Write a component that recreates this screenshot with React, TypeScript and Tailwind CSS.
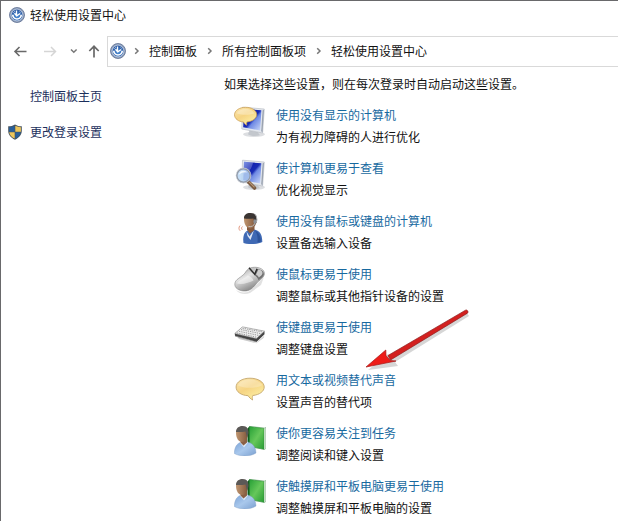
import React from 'react';

const monitorBase = (
  <>
    <ellipse cx="20" cy="28.3" rx="11" ry="2.6" fill="#dcdee1" />
    <path d="M15.5 24.5l8 1.500 2.500 3.200c-5 1.400-9.500.8-12-1z" fill="#c3c7cd" />
    <path d="M8.500 1.200L30.300 3 28.600 27 7.800 23z" fill="#e4e8ee" stroke="#b1b7c0" strokeWidth="0.6" />
    <path d="M10 2.800L27.400 4.300 26.200 24.500 9.200 21.200z" fill="url(#screen)" />
    <path d="M10 2.800L19 3.600c-1 6-4.500 10-9.500 11.500z" fill="#fff" opacity="0.25" />
    <path d="M28.600 4.200L30 3.800 28.500 26.500 27.200 25.200z" fill="#9aa3b0" />
  </>
);

function Gradients() {
  return (
    <svg className="absolute h-0 w-0" aria-hidden="true">
      <defs>
        <linearGradient id="screen" x1="0" y1="0.1" x2="0.9" y2="1">
          <stop offset="0" stopColor="#4a68d8" />
          <stop offset="0.3" stopColor="#1222b0" />
          <stop offset="0.5" stopColor="#1a2cb4" />
          <stop offset="0.6" stopColor="#6f8ae4" />
          <stop offset="1" stopColor="#c3d2f7" />
        </linearGradient>
        <linearGradient id="speech" x1="0" y1="0" x2="0.7" y2="1">
          <stop offset="0" stopColor="#fbe7b4" />
          <stop offset="0.5" stopColor="#f6d483" />
          <stop offset="1" stopColor="#fdf0a4" />
        </linearGradient>
        <linearGradient id="book" x1="0" y1="0" x2="1" y2="1">
          <stop offset="0" stopColor="#27a036" />
          <stop offset="0.5" stopColor="#66c75a" />
          <stop offset="1" stopColor="#279c34" />
        </linearGradient>
        <linearGradient id="shirt" x1="0" y1="0" x2="1" y2="1">
          <stop offset="0" stopColor="#7ba3d8" />
          <stop offset="0.5" stopColor="#a9c8ec" />
          <stop offset="1" stopColor="#7ba0d0" />
        </linearGradient>
        <linearGradient id="skin" x1="0" y1="0" x2="1" y2="0">
          <stop offset="0" stopColor="#c09670" />
          <stop offset="1" stopColor="#7d5439" />
        </linearGradient>
        <linearGradient id="metal" x1="0" y1="0" x2="0.6" y2="1">
          <stop offset="0" stopColor="#8b8b8b" />
          <stop offset="0.45" stopColor="#e4e4e4" />
          <stop offset="1" stopColor="#7c7c7c" />
        </linearGradient>
        <radialGradient id="badge" cx="0.5" cy="0.6" r="0.6">
          <stop offset="0" stopColor="#4d8ed6" />
          <stop offset="1" stopColor="#24519c" />
        </radialGradient>
      </defs>
    </svg>
  );
}

function EaseIcon() {
  return (
    <svg viewBox="0 0 16 16" className="h-4 w-4 shrink-0" aria-hidden="true">
      <circle cx="8" cy="8" r="7.500" fill="#8c9db9" stroke="#5d6f92" strokeWidth="0.8" />
      <circle cx="8" cy="8" r="5.900" fill="url(#badge)" stroke="#dbe4f1" strokeWidth="0.7" />
      <path d="M3.800 7.800a4.200 4.200 0 0 0 8.400 0" fill="none" stroke="#fff" strokeWidth="1.700" />
      <path d="M4 5.800A4.500 4.500 0 0 1 6 4M10.500 4.200a4.500 4.500 0 0 1 1.500 1.600" fill="none" stroke="#e6eefb" strokeWidth="1" strokeDasharray="1 0.7" />
      <path d="M7.500 3.500v5M5.500 6.300l2.200 2.500 3.500-2.300" fill="none" stroke="#fff" strokeWidth="1.300" />
    </svg>
  );
}

function MonitorSpeechIcon() {
  return (
    <>
      {monitorBase}
      <path d="M11.500 1.300C5.500 1.300.5 4.500.5 8.800c0 4 4 6.800 9 7.200.8 1.500 2 2.700 3.300 3.200-.4-1-.3-2.300.2-3.300 5.500-.5 9.700-3.400 9.700-7.300 0-4.300-5-7.300-11.200-7.300z" fill="url(#speech)" stroke="#c79a4c" strokeWidth="0.7" />
      <path d="M3 7.500c1-3.200 5-4.800 9-4.600 4 .1 7.500 1.700 8.200 4.500-5 1.800-12 1.800-17.200.1z" fill="#fff" opacity="0.3" />
    </>
  );
}

function MagnifierIcon() {
  return (
    <>
      {monitorBase}
      <path d="M14.500 23l6 6" stroke="#795a43" strokeWidth="3.600" strokeLinecap="round" />
      <path d="M15 22.800l5.500 5.500" stroke="#b79878" strokeWidth="1.200" />
      <circle cx="9.500" cy="16.500" r="6.800" fill="#b9d6f5" fillOpacity="0.85" stroke="#919aa8" strokeWidth="1.700" />
      <path d="M4.500 16c1-4.500 6-5.500 9-2.500-3-.5-6 0-9 2.500z" fill="#fff" opacity="0.75" />
      <circle cx="9.500" cy="16.500" r="7.500" fill="none" stroke="#e8ebef" strokeWidth="0.5" />
    </>
  );
}

function HeadsetIcon() {
  return (
    <>
      <path d="M9.500 31c-.8-6 .2-11 4.500-12.500l6-1c5.500.8 8.200 4.500 8.300 12.500-4.800 2.500-13.300 2.700-18.800 1z" fill="#3f69b4" />
      <path d="M12.500 19.500l3 5 3.500-5 1-1.500-3.500 10-3-4z" fill="#dfe8f6" />
      <path d="M21 18.500c3.500 2 5.500 5 6 11l-3.500 1c.5-5-.2-9-2.500-12z" fill="#2c539b" />
      <path d="M13 13h7.500v5L16 21.500 13 18z" fill="#865b3f" />
      <path d="M10 7.500c0-4 2.500-6 6.500-6 4.300 0 6.700 2.800 6.300 7-.4 4-2.800 8-6.300 8s-6.500-4-6.500-9z" fill="url(#skin)" />
      <path d="M10 6.500C9.900 3 12 .9 16.500.9c5 0 7.300 3.300 6.500 8.500L21 12l-1.500-5.500c-3 .3-6.700.3-9.500 0z" fill="#3a3533" />
      <path d="M20.500 2c2 1 2.800 4 2 8M21 11c-1 3-3.500 4-6.500 3.500" stroke="#c4c7cb" strokeWidth="0.9" fill="none" />
      <ellipse cx="20.900" cy="9.500" rx="1.500" ry="2.300" fill="#8b8f95" />
      <path d="M8.500 14.500c-1.200 1-1.200 2.300-.2 3.300M6 13.600c-1.500 1.600-1.300 4 .2 5.200" stroke="#df8c72" strokeWidth="0.9" fill="none" />
    </>
  );
}

function MouseIcon() {
  return (
    <>
      <path d="M2 25c5 3.500 12 3.500 16-1l12-12-3 8-11 8c-5 2-11 1-14-3z" fill="#c4c4c4" opacity="0.5" />
      <path d="M.8 19C1 14 7.500 12.500 11 8c2.500-4.500 6-6 11-5.700 5.500.4 9.200 3.300 8.300 7.500-1 3.700-5.300 5.200-8.300 9.200-3 4-6.500 7.500-12.500 7C4.500 25.500.6 23 .8 19z" fill="url(#metal)" stroke="#777" strokeWidth="0.5" />
      <path d="M20 9.800l3.500-6c4 .6 6.900 2.900 6.300 5.900-.6 2.300-3.300 3.800-5.200 5.500-.6-1.800-2.500-4-4.600-5.400z" fill="#707070" />
      <path d="M13.500 5c2.500-2 5.500-2.300 8-2L19.500 9.500c-1.400-1.600-4-3.500-6-4.500z" fill="#c4c4c4" />
      <path d="M22 9.500l2.500-5.300c3 .7 4.400 2.500 3.900 4.600-.5 1.600-2 2.500-3.500 3.700-.5-1.200-1.600-2.200-2.900-3z" fill="#cdcdcd" />
      <path d="M15 2.800l5.700 6.400 2.300-5.500" stroke="#2b2b2b" strokeWidth="1.500" fill="none" />
      <path d="M3 18.500c2-4 7.500-5 11-8 3 1 5 3 5.500 5-4 2-11.500 4.500-16.500 3z" fill="#fff" opacity="0.5" />
    </>
  );
}

function KeyboardIcon() {
  return (
    <>
      <path d="M3 18.500L22.500 25l8-7.500-1 2.500-7 5.300L5 21z" fill="#cbcbcb" />
      <path d="M.8 15.500L8.500 9l22 4.300v3L22.500 24 1 18z" fill="#444" />
      <path d="M.8 15.500L8.500 8.800l22 4.300-8 7.400z" fill="#ededed" stroke="#888" strokeWidth="0.5" />
      <path d="M3 15l19.500 4.200M5 13.300l19.500 4.100M7 11.600l19.500 4M8.500 10.200l20 3.700" stroke="#777" strokeWidth="0.7" strokeDasharray="1.300 1" />
      <path d="M1 18l21.500 6" stroke="#8b8b8b" strokeWidth="0.7" />
    </>
  );
}

function SpeechIcon() {
  return (
    <>
      <path d="M16 7.200C8 7.200 2.100 11 2.100 16c0 4.900 4.900 8.300 12 8.700 1 1.600 2.500 3.100 4.500 4.300-.5-1.600-.4-3.100.2-4.500C25.500 23.800 30.200 20.400 30.200 16c0-5-6.200-8.800-14.200-8.800z" fill="url(#speech)" stroke="#c5a76c" strokeWidth="0.9" />
      <path d="M4 14.500c1.500-3.800 6.500-5.900 12.500-5.900s10.500 2.300 11.800 5.400c-5 3.400-17.500 4-24.300.5z" fill="#fff" opacity="0.25" />
    </>
  );
}

function ReaderIcon() {
  return (
    <>
      <path d="M15.500 2.500L30.500 4l1.300-.5v21L30.500 25.500l-15-3z" fill="#f1f5ee" stroke="#4e9156" strokeWidth="0.5" />
      <path d="M15.500 2.500L30 4.500v20.700L15.500 22.500z" fill="url(#book)" stroke="#2d8a37" strokeWidth="0.5" />
      <path d="M13.500 4.300l2-1.800v20l-2 1z" fill="#0e5f1d" />
      <path d="M.3 29.500C.6 21.500 4 18.500 9 17.700c8-.6 12.600 3.500 13 11.300-5 3.500-16 4-21.700.5z" fill="url(#shirt)" stroke="#7d9cc5" strokeWidth="0.4" />
      <path d="M6 18.500l4 5 4-5-2-2H7z" fill="#dbe8f8" />
      <path d="M6.500 14h6.500v4.500l-3.500 3-3-3z" fill="#8a6045" />
      <path d="M2 9c0-4 2.700-6.500 6.500-6.500 4.500 0 6.200 3 5.700 7.300-.5 4.200-2.500 8.200-5.900 8.200C4.500 18 2 14 2 9z" fill="url(#skin)" />
      <path d="M2 8C2 4 4.700 1.900 8.500 1.900c4.700 0 6.500 3.300 5.700 8.300L13 13.500l-1.500-6C8.500 8.200 5 8.200 2 8z" fill="#5b5957" />
    </>
  );
}

function ShieldIcon() {
  return (
    <svg viewBox="0 0 16 16" className="h-4 w-4 shrink-0" aria-hidden="true">
      <path d="M8 .4c2 1.300 4.300 1.900 6.800 1.900v4.500c0 4-2.600 7-6.800 8.900C3.800 13.800 1.200 10.800 1.200 6.800V2.300C3.700 2.300 6 1.700 8 .4z" fill="#47545f" />
      <path d="M7.700 1.800v6H2.100V3.200c2 0 4-.5 5.600-1.400z" fill="#285e99" />
      <path d="M8.300 1.800v6h5.600V3.200c-2 0-4-.5-5.600-1.400z" fill="#edc65b" />
      <path d="M2.200 8.200h5.500v6.400c-3-1.400-5-3.500-5.500-6.400z" fill="#edc65b" />
      <path d="M13.800 8.200H8.300v6.400c3-1.400 5-3.500 5.500-6.400z" fill="#285e99" />
    </svg>
  );
}

function Crumb({ label }: { label: string }) {
  return (
    <>
      <svg viewBox="0 0 8 8" className="mx-1 h-2 w-2 shrink-0" fill="none" stroke="#777" strokeWidth="1.500" aria-hidden="true">
        <path d="M2.200 1.200L5 4 2.200 6.800" />
      </svg>
      <a href="#" className="ml-1 mr-[5px] whitespace-nowrap">{label}</a>
    </>
  );
}

const settings = [
  { title: '使用没有显示的计算机', text: '为有视力障碍的人进行优化', icon: <MonitorSpeechIcon /> },
  { title: '使计算机更易于查看', text: '优化视觉显示', icon: <MagnifierIcon /> },
  { title: '使用没有鼠标或键盘的计算机', text: '设置备选输入设备', icon: <HeadsetIcon /> },
  { title: '使鼠标更易于使用', text: '调整鼠标或其他指针设备的设置', icon: <MouseIcon /> },
  { title: '使键盘更易于使用', text: '调整键盘设置', icon: <KeyboardIcon /> },
  { title: '用文本或视频替代声音', text: '设置声音的替代项', icon: <SpeechIcon /> },
  { title: '使你更容易关注到任务', text: '调整阅读和键入设置', icon: <ReaderIcon /> },
  { title: '使触摸屏和平板电脑更易于使用', text: '调整触摸屏和平板电脑的设置', icon: <ReaderIcon /> },
];

export default function App() {
  return (
    <div className="relative min-h-screen overflow-hidden border-l border-t border-[#69696b] bg-white font-['Noto_Sans_CJK_SC',sans-serif] text-xs text-[#111]">
      <Gradients />

      <header>
        <div className="flex h-7 items-center gap-[5px] pl-2">
          <EaseIcon />
          <h1>轻松使用设置中心</h1>
        </div>

        <div className="mt-1 flex h-8 items-center pt-1">
          <nav className="flex w-[106px] shrink-0 items-center pl-3" aria-label="导航">
            <button aria-label="后退" className="w-[30px]">
              <svg viewBox="0 0 14 14" className="h-[14px] w-[14px]" fill="none" stroke="#696969" strokeWidth="1.600">
                <path d="M13.500 7.500H2M6.500 3L2 7.500 6.500 12" />
              </svg>
            </button>
            <button aria-label="前进" className="w-[27px]">
              <svg viewBox="0 0 14 14" className="h-[14px] w-[14px]" fill="none" stroke="#d5d5d5" strokeWidth="1.500">
                <path d="M1 7.500h11.500M8 3l4.500 4.500L8 12" />
              </svg>
            </button>
            <button aria-label="最近浏览的位置" className="w-[17px]">
              <svg viewBox="0 0 8 8" className="h-2 w-2" fill="none" stroke="#777" strokeWidth="1.500">
                <path d="M1 2.500l2.800 2.800 2.800-2.800" />
              </svg>
            </button>
            <button aria-label="向上">
              <svg viewBox="0 0 14 14" className="h-[14px] w-[14px]" fill="none" stroke="#696969" strokeWidth="1.700">
                <path d="M7 13.500V2.500M2.300 7L7 2.300 11.700 7" />
              </svg>
            </button>
          </nav>
          <div className="flex h-[31px] grow items-center border border-r-0 border-[#d9d9d9] pl-[2px]">
            <EaseIcon />
            <div className="flex items-center pl-[3px]">
              <Crumb label="控制面板" />
              <Crumb label="所有控制面板项" />
              <Crumb label="轻松使用设置中心" />
            </div>
          </div>
        </div>
      </header>

      <div className="flex">
        <aside className="flex w-[223px] shrink-0 flex-col gap-4 pl-[6px] pt-[21px] leading-5 text-[#1c2f5c]">
          <a href="#" className="pl-[23px]">控制面板主页</a>
          <a href="#" className="flex items-center gap-[7px]">
            <ShieldIcon />
            更改登录设置
          </a>
        </aside>

        <main className="relative grow pt-[9px]">
          <p className="leading-5">如果选择这些设置，则在每次登录时自动启动这些设置。</p>
          <ul className="flex flex-col gap-[9px] pl-[10px] pt-[10px]">
            {settings.map((item) => (
              <li key={item.title} className="flex gap-[10px] leading-[22px]">
                <svg viewBox="0 0 32 32" className="mt-[2px] h-8 w-8 shrink-0" aria-hidden="true">
                  {item.icon}
                </svg>
                <div>
                  <a href="#" className="block text-[#17699f]">{item.title}</a>
                  <p>{item.text}</p>
                </div>
              </li>
            ))}
          </ul>

          <svg viewBox="0 0 112 68" className="pointer-events-none absolute left-[138px] top-[240px] h-[68px] w-[112px] overflow-visible" aria-hidden="true">
            <g fill="#777" opacity="0.3">
              <path d="M6 65l20-16 2.500 4L105 8l2 3L33 57l3 4z" />
            </g>
            <path d="M26 50.500L103.500 5.200a1.800 1.800 0 0 1 1.900 3L28.500 55z" fill="#d3201f" stroke="#8d1d1d" strokeWidth="0.7" />
            <path d="M4 62L23.800 45l.2 5.500 4.300 5L34 56z" fill="#ee1c18" stroke="#a51a19" strokeWidth="0.7" />
          </svg>
        </main>
      </div>
      <div className="absolute -top-px left-[304px] h-px w-[67px] bg-[#243f40]" />
    </div>
  );
}
